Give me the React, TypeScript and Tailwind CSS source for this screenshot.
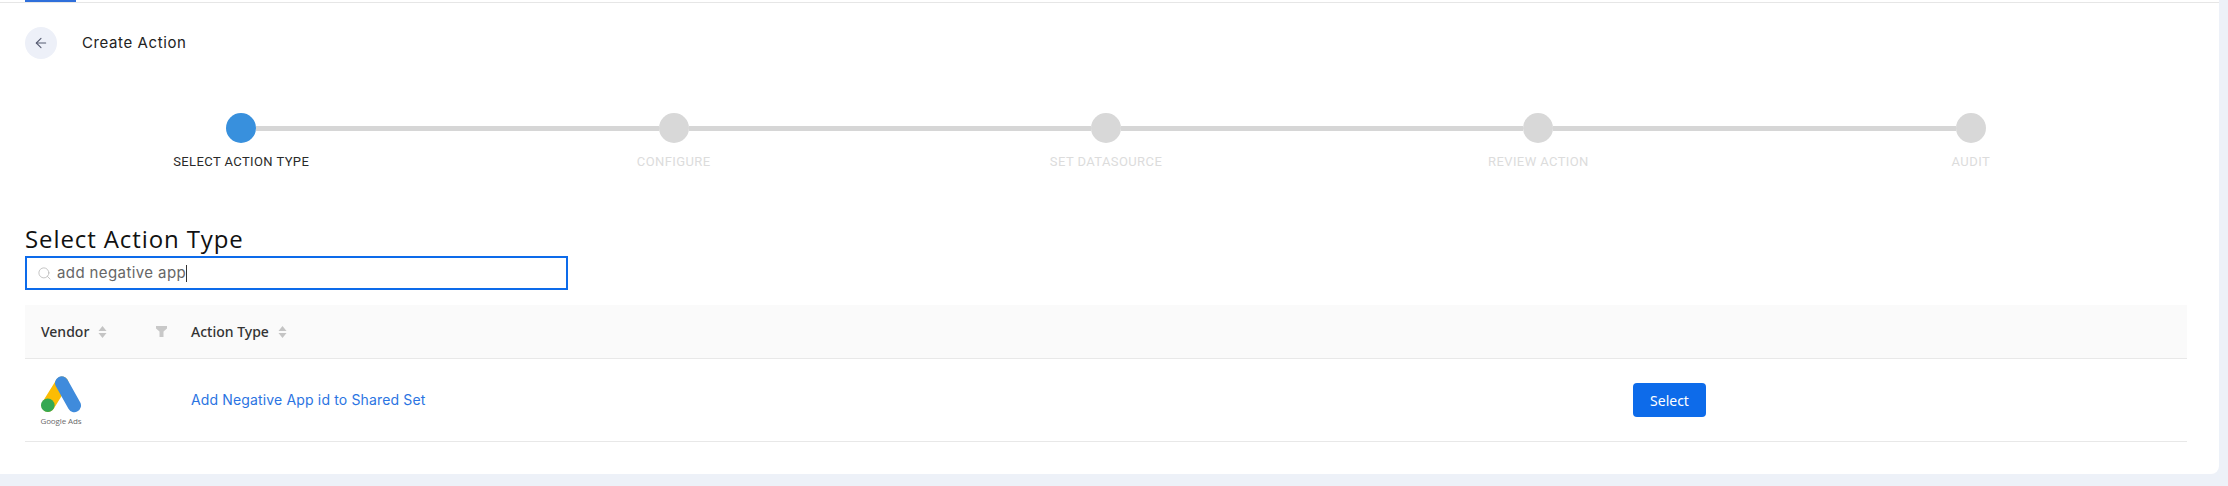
import { ArrowLeft, Search } from 'lucide-react';

const steps = ['SELECT ACTION TYPE', 'CONFIGURE', 'SET DATASOURCE', 'REVIEW ACTION', 'AUDIT'];

function SortIcon() {
  return (
    <svg width="9" height="14" viewBox="0 0 9 14" className="shrink-0">
      <path d="M4.5 1 8.5 6H.5z" fill="#c4c4c4" />
      <path d="M4.5 13 .5 8h8z" fill="#c4c4c4" />
    </svg>
  );
}

function FilterIcon() {
  return (
    <svg width="11" height="11" viewBox="0 0 11 11" className="shrink-0">
      <path d="M0 0h11v2.5l-3.5 3V11h-4V5.5L0 2.5z" fill="#c8c8c8" />
    </svg>
  );
}

function GoogleAdsLogo() {
  return (
    <div className="flex flex-col items-center w-10">
      <svg width="40" height="38" viewBox="0 0 40 38">
        <line x1="21" y1="8" x2="7" y2="30.5" stroke="#fbbc04" strokeWidth="13" strokeLinecap="round" />
        <line x1="20.7" y1="8" x2="33.3" y2="30.5" stroke="#3f8bdc" strokeWidth="13.4" strokeLinecap="round" />
        <circle cx="6.8" cy="30.3" r="6.8" fill="#34a853" />
      </svg>
      <span className="mt-[2px] text-[8px] leading-[11px] whitespace-nowrap text-[#6b6b6b] font-['Open_Sans',sans-serif] tracking-[-0.1px]">
        Google Ads
      </span>
    </div>
  );
}

export default function App() {
  return (
    <div className="h-[486px] w-[2228px] overflow-hidden bg-[#edf1f8] pr-[9px] font-['Inter',sans-serif]">
      <div className="h-[474px] bg-white rounded-br-lg">
        {/* tab bar underline */}
        <div className="h-[3px] border-b border-[#e6e6e6] pl-[25px]">
          <div className="h-[2px] w-[51px] bg-[#2f6fdb]" />
        </div>

        <div className="flex items-center h-[32px] mt-[24px] pl-[25px]">
          <button className="flex items-center justify-center size-8 rounded-full bg-[#edf0f8] text-[#555a70]">
            <ArrowLeft size={16} strokeWidth={1.6} />
          </button>
          <h1 className="ml-[25px] text-[15px] tracking-[0.6px] text-[#222]">Create Action</h1>
        </div>

        {/* stepper */}
        <div className="flex pl-[25px] pr-[32px] mt-[54px]">
          {steps.map((label, i) => (
            <div key={label} className="flex-1 flex flex-col items-center">
              <div className="flex items-center w-full">
                <div className={`flex-1 h-[5px] ${i === 0 ? 'bg-transparent' : 'bg-[#d6d6d6]'}`} />
                <div className={`size-[30px] rounded-full shrink-0 ${i === 0 ? 'bg-[#3890dd]' : 'bg-[#d8d8d8]'}`} />
                <div className={`flex-1 h-[5px] ${i === steps.length - 1 ? 'bg-transparent' : 'bg-[#d6d6d6]'}`} />
              </div>
              <div
                className={`mt-[11px] text-[13px] leading-[16px] font-['Roboto',sans-serif] tracking-[0.4px] ${
                  i === 0 ? 'text-[#2a2a2a]' : 'text-[#dcdcdc]'
                }`}
              >
                {label}
              </div>
            </div>
          ))}
        </div>

        <div className="pl-[25px] pr-[32px] mt-[54px]">
          <h2 className="text-[24px] leading-[30px] tracking-[0.9px] text-[#111] font-['Open_Sans',sans-serif]">
            Select Action Type
          </h2>
          <div className="flex items-center h-[34px] w-[543px] mt-[2px] border-2 border-[#0d6bea] pl-[10px]">
            <Search size={15} strokeWidth={1.4} className="text-[#bdbdbd] shrink-0" />
            <span className="ml-[5px] text-[15px] tracking-[0.4px] text-[#666]">add negative app</span>
            <span className="w-px h-[17px] bg-[#333]" />
          </div>

          {/* table */}
          <div className="mt-[15px] flex items-center h-[54px] bg-[#fafafa] border-b border-[#e8e8e8] text-[14px] font-medium text-[#333] font-['Noto_Sans',sans-serif]">
            <div className="flex items-center w-[166px] pl-4 pr-[24px]">
              <span>Vendor</span>
              <span className="ml-[9px]">
                <SortIcon />
              </span>
              <span className="ml-auto">
                <FilterIcon />
              </span>
            </div>
            <div className="flex items-center">
              <span>Action Type</span>
              <span className="ml-[9px]">
                <SortIcon />
              </span>
            </div>
          </div>
          <div className="flex items-center h-[83px] border-b border-[#e8e8e8]">
            <div className="w-[166px] pl-4">
              <GoogleAdsLogo />
            </div>
            <a className="w-[1442px] -mt-[2px] text-[14px] tracking-[0.15px] text-[#2b74e2]">
              Add Negative App id to Shared Set
            </a>
            <button className="w-[73px] h-[34px] rounded-[4px] bg-[#0d6bea] text-white text-[14px] font-['Noto_Sans',sans-serif]">
              Select
            </button>
          </div>
        </div>
      </div>
    </div>
  );
}
